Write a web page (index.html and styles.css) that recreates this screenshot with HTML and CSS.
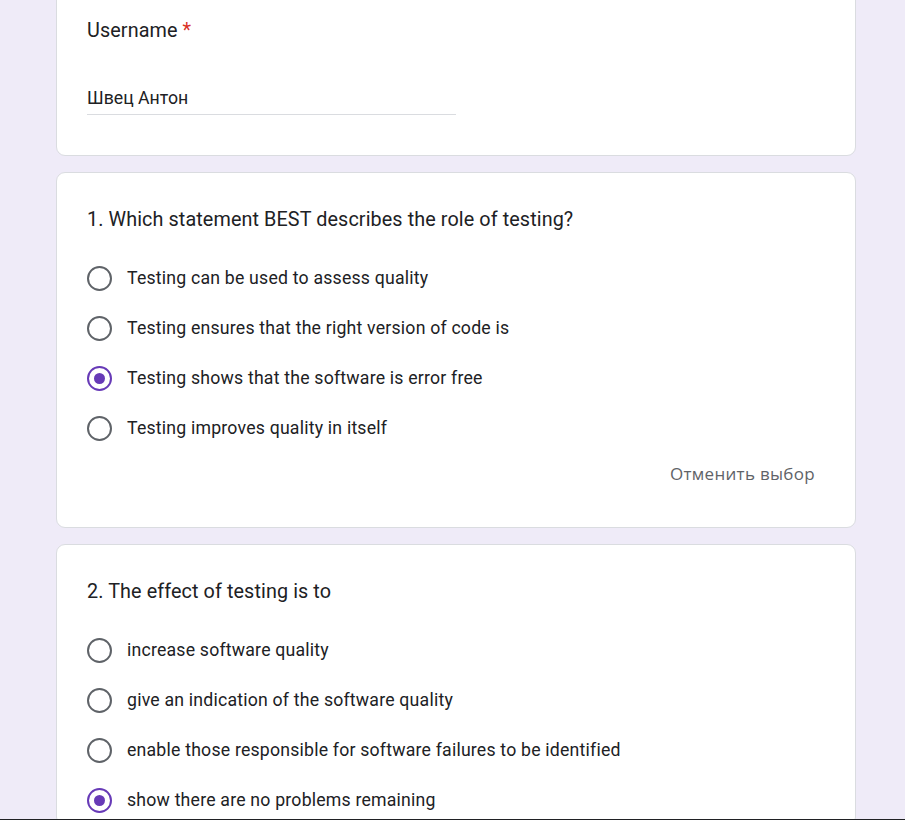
FILE: index.html
```html
<!DOCTYPE html>
<html lang="ru">
<head>
<meta charset="utf-8">
<title>Form</title>
<link rel="stylesheet" href="styles.css">
</head>
<body>
<main class="form">
  <section class="card card-user">
    <div class="q-title">Username <span class="req">*</span></div>
    <div class="input">Швец Антон</div>
  </section>

  <section class="card">
    <div class="q-title">1. Which statement BEST describes the role of testing?</div>
    <ul class="options">
      <li class="opt"><span class="radio"></span><span>Testing can be used to assess quality</span></li>
      <li class="opt"><span class="radio"></span><span>Testing ensures that the right version of code is</span></li>
      <li class="opt"><span class="radio checked"></span><span>Testing shows that the software is error free</span></li>
      <li class="opt"><span class="radio"></span><span>Testing improves quality in itself</span></li>
    </ul>
    <div class="actions"><button class="clear">Отменить выбор</button></div>
  </section>

  <section class="card">
    <div class="q-title">2. The effect of testing is to</div>
    <ul class="options">
      <li class="opt"><span class="radio"></span><span>increase software quality</span></li>
      <li class="opt"><span class="radio"></span><span>give an indication of the software quality</span></li>
      <li class="opt"><span class="radio"></span><span>enable those responsible for software failures to be identified</span></li>
      <li class="opt"><span class="radio checked"></span><span>show there are no problems remaining</span></li>
    </ul>
  </section>
</main>
<div class="bottom-edge"></div>
</body>
</html>
```

FILE: styles.css
```css
html, body {
  margin: 0;
  padding: 0;
}
body {
  background: #efebf8;
  font-family: Roboto, "Noto Sans", Arial, sans-serif;
  color: #202124;
  height: 820px;
  overflow: hidden;
}
.form {
  width: 800px;
  margin: -38px 0 0 56px;
  display: flex;
  flex-direction: column;
  gap: 16px;
}
.card {
  background: #fff;
  border: 1px solid #dadce0;
  border-radius: 9px;
  padding: 35px 30px 0 30px;
}
.card-user {
  padding-top: 56px;
  padding-bottom: 40px;
}
.q-title {
  font-size: 19.8px;
  line-height: 24px;
  letter-spacing: 0.1px;
}
.req {
  color: #d93025;
}
.input {
  margin-top: 45px;
  width: 369px;
  font-size: 17.7px;
  line-height: 20px;
  padding-bottom: 6px;
  border-bottom: 1px solid #dadce0;
}
.options {
  list-style: none;
  margin: 21px 0 0;
  padding: 0;
}
.opt {
  height: 50px;
  display: flex;
  align-items: center;
  gap: 15px;
  font-size: 17.7px;
  letter-spacing: 0.2px;
}
.radio {
  box-sizing: border-box;
  width: 25px;
  height: 25px;
  border: 2.3px solid #5f6368;
  border-radius: 50%;
  display: flex;
  align-items: center;
  justify-content: center;
  flex: none;
}
.radio.checked {
  border-color: #673ab7;
}
.radio.checked::after {
  content: "";
  width: 11px;
  height: 11px;
  border-radius: 50%;
  background: #673ab7;
}
.actions {
  display: flex;
  justify-content: flex-end;
  padding: 2px 0 36px;
}
.clear {
  background: none;
  border: none;
  font-family: "Open Sans", Roboto, sans-serif;
  font-size: 17px;
  font-weight: 500;
  color: #5f6368;
  letter-spacing: 0.3px;
  height: 36px;
  padding: 0 10px;
  margin: 0;
}
.bottom-edge {
  position: fixed;
  left: 0;
  right: 0;
  bottom: 0;
  height: 1px;
  background: #202124;
}
```
